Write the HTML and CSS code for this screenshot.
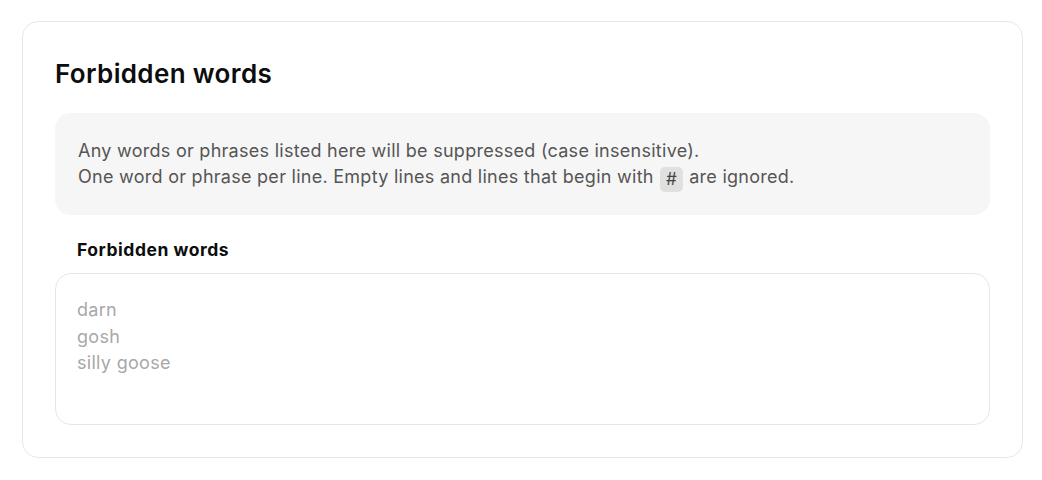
FILE: index.html
```html
<!DOCTYPE html>
<html>
<head>
<meta charset="utf-8">
<link rel="stylesheet" href="styles.css">
</head>
<body>
<div class="page">
  <section class="card">
    <h1 class="title">Forbidden words</h1>
    <div class="info">
      <p>Any words or phrases listed here will be suppressed (case insensitive).</p>
      <p>One word or phrase per line. Empty lines and lines that begin with <code class="chip">#</code> are ignored.</p>
    </div>
    <label class="label" for="words">Forbidden words</label>
    <textarea id="words" class="field" placeholder="darn&#10;gosh&#10;silly goose"></textarea>
  </section>
</div>
</body>
</html>
```
FILE: styles.css
```css
* { box-sizing: border-box; }
html, body { margin: 0; background: #fff; }
body { font-family: Inter, "Noto Sans", sans-serif; color: #111; }
.page { padding: 21px 19px 0 22px; }
.card {
  border: 1px solid #e8e8e8;
  border-radius: 16px;
  padding: 32px;
  display: flex;
  flex-direction: column;
}
.title {
  margin: 0;
  font-size: 26px;
  line-height: 39px;
  font-weight: 600;
  color: #0d0d0d;
  letter-spacing: 0.35px;
}
.info {
  margin-top: 20px;
  background: #f6f6f6;
  border-radius: 16px;
  padding: 25px 23px 23px;
  color: #555;
  font-size: 18px;
  line-height: 26px;
  letter-spacing: 0.27px;
}
.info p { margin: 0; }
.chip {
  display: inline-block;
  background: #e0e0e0;
  border-radius: 5px;
  font-family: Inter, sans-serif;
  font-size: 17px;
  line-height: 25px;
  padding: 0 6px;
  margin: 0 1px;
  color: #444;
  vertical-align: -2px;
  letter-spacing: 0;
}
.label {
  margin: 22px 0 0 22px;
  font-size: 17.5px;
  line-height: 26px;
  font-weight: 700;
  color: #0d0d0d;
  letter-spacing: 0.53px;
}
.field {
  margin-top: 10px;
  height: 152px;
  border: 1px solid #e6e6e6;
  border-radius: 16px;
  padding: 23px 21px;
  font-family: Inter, sans-serif;
  font-size: 18px;
  line-height: 26.5px;
  letter-spacing: 0.3px;
  resize: none;
  outline: none;
  color: #111;
}
.field::placeholder { color: #a8a8a8; }
```
